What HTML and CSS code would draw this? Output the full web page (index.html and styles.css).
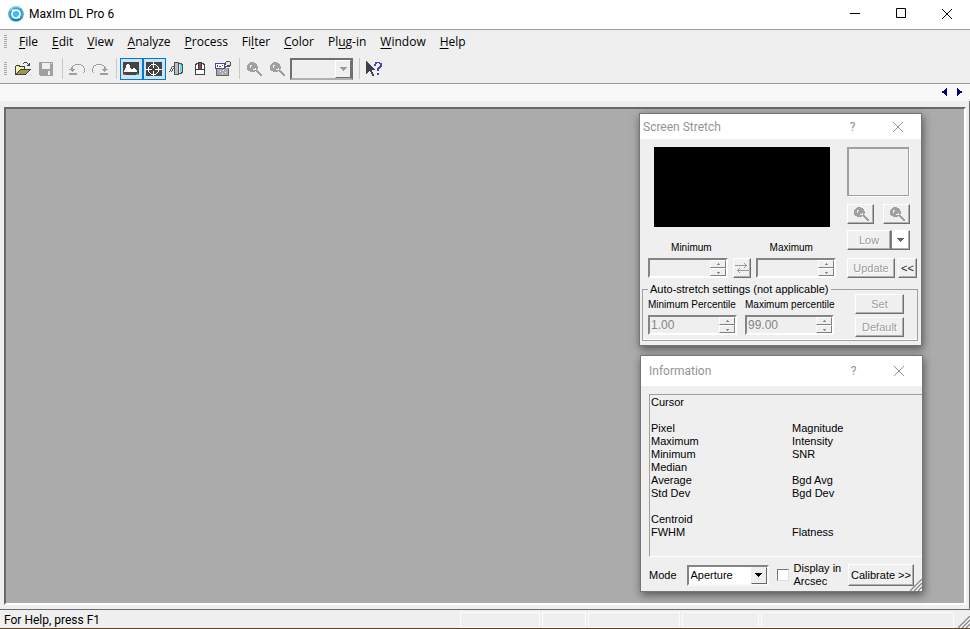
FILE: index.html
```html
<!DOCTYPE html>
<html lang="en">
<head>
<meta charset="utf-8">
<title>MaxIm DL Pro 6</title>
<link rel="stylesheet" href="styles.css">
</head>
<body>
<svg class="defs" aria-hidden="true">
  <symbol id="lens" viewBox="0 0 16 16">
    <path fill="#a0a0a0" d="M4 1h4v1h2v1h1v2h1v3h-1v1h1v1h1v1h1v1h1v1h1v2h-2v-1h-1v-1h-1v-1h-1v-1h-1v-1h-1v1H4v-1H2V9H1V4h1V3h1V2h1z"/>
    <path fill="#efefef" d="M4 4h2v1H5v2H4zM9 7h1v2H7V8h2z"/>
  </symbol>
  <symbol id="close" viewBox="0 0 12 12"><path d="M1 1l10 10M11 1L1 11" fill="none" stroke="currentColor" stroke-width="1"/></symbol>
  <symbol id="down" viewBox="0 0 7 4"><path d="M0 0h7v1H6v1H5v1H4v1H3V3H2V2H1V1H0z" fill="currentColor"/></symbol>
  <symbol id="spinup" viewBox="0 0 5 3"><path d="M2 0h1v1h1v1H1V1h1z" fill="#8a8a8a"/></symbol>
  <symbol id="spindown" viewBox="0 0 5 3"><path d="M1 1h3v1H3v1H2V2H1z" fill="#8a8a8a"/></symbol>
  <symbol id="grip" viewBox="0 0 12 12"><path d="M0 12L12 0M4 12l8-8M8 12l4-4" stroke="#8c8c8c" stroke-width="1.4"/><path d="M2 12L12 2M6 12l6-6M10 12l2-2" stroke="#fff" stroke-width="1"/></symbol>
</svg>
<div class="app">
  <header class="titlebar">
    <svg class="logo" viewBox="0 0 16 16" aria-hidden="true">
      <circle cx="8" cy="8" r="7.8" fill="#35a6d8"/>
      <path d="M1.5 5A7 7 0 0 1 12 2" fill="none" stroke="#8bd0ee" stroke-width="1.6"/>
      <path d="M4 13a7 7 0 0 0 9.500-2" fill="none" stroke="#1682bd" stroke-width="2"/>
      <circle cx="8" cy="8" r="4" fill="#4ab9e6" stroke="#fff" stroke-width="1.700"/>
      <path d="M4 4l3 1M12 12l-2-2" stroke="#fff" stroke-width="1.500"/>
    </svg>
    <h1>MaxIm DL Pro 6</h1>
    <div class="winctl">
      <button type="button" aria-label="Minimize"><svg width="11" height="11" viewBox="0 0 11 11"><path d="M0 5.500h10" stroke="#000"/></svg></button>
      <button type="button" aria-label="Maximize"><svg width="11" height="11" viewBox="0 0 11 11"><path d="M.5.5h9v9h-9z" fill="none" stroke="#000"/></svg></button>
      <button type="button" aria-label="Close"><svg width="12" height="12"><use href="#close"/></svg></button>
    </div>
  </header>

  <nav class="menubar" aria-label="Main menu">
    <span class="handle"></span>
    <button type="button"><u>F</u>ile</button>
    <button type="button"><u>E</u>dit</button>
    <button type="button"><u>V</u>iew</button>
    <button type="button"><u>A</u>nalyze</button>
    <button type="button"><u>P</u>rocess</button>
    <button type="button">Fi<u>l</u>ter</button>
    <button type="button"><u>C</u>olor</button>
    <button type="button">Pl<u>u</u>g-in</button>
    <button type="button"><u>W</u>indow</button>
    <button type="button"><u>H</u>elp</button>
  </nav>

  <div class="toolbar" role="toolbar" aria-label="Standard">
    <span class="handle"></span>
    <button type="button" aria-label="Open"><svg class="icon" viewBox="0 0 16 16">
      <path fill="#404040" d="M1 4h4v1h5v3H9V6H4V5H1zM0 5h1v8H0zM0 13h11v1H0zM5 8h11v1h-1v1h-1v1h-1v1h-1v1h-1v1h-1v-1h1v-1h1v-1h1v-1h1V9H5zM4 9h1v1H4zM3 10h1v1H3zM2 11h1v1H2zM1 12h1v1H1zM8 2h1v1H8zM9 1h3v1H9zM12 2h1v1h-1zM13 3h1v1h-1zM14 2h1v3h-3V4h2z"/>
      <path fill="#f3ee91" d="M1 5h3v1h5v2H4v1H3v1H2v1H1z"/><path fill="#fff" d="M2 6h1v1H2zM4 7h1v1H4zM6 6h1v1H6zM1 8h1v1H1zM7 7h1v1H7z"/>
      <path fill="#9c9a45" d="M5 9h9v1h-1v1h-1v1h-1v1H2v-1h1v-1h1v-1h1z"/></svg></button>
    <button type="button" disabled aria-label="Save"><svg class="icon" viewBox="0 0 16 16">
      <path fill="#a0a0a0" fill-rule="evenodd" d="M1 1h14v14H2v-1H1zM4 2v6h8V2zM10 10v4h2v-4z"/><path fill="#efefef" d="M13 2h1v1h-1z"/></svg></button>
    <i class="sep"></i>
    <button type="button" disabled aria-label="Undo"><svg class="icon" viewBox="0 0 16 16">
      <path fill="#a0a0a0" d="M6 3h6v1H6zM4 4h2v1H4zM12 4h2v1h-2zM3 5h1v3h2v1H5v1H4v1H3v-1H2V9H0V8h2V6h1zM14 5h1v2h-1zM15 7h1v4h-1zM14 11h1v1h-1zM0 12h8v2H0z"/></svg></button>
    <button type="button" disabled aria-label="Redo"><svg class="icon" viewBox="0 0 16 16">
      <g transform="matrix(-1 0 0 1 16 0)"><path fill="#a0a0a0" d="M6 3h6v1H6zM4 4h2v1H4zM12 4h2v1h-2zM3 5h1v3h2v1H5v1H4v1H3v-1H2V9H0V8h2V6h1zM14 5h1v2h-1zM15 7h1v4h-1zM14 11h1v1h-1zM0 12h8v2H0z"/></g></svg></button>
    <i class="sep"></i>
    <button type="button" class="on" aria-pressed="true" aria-label="Screen Stretch"><svg class="icon" viewBox="0 0 16 16">
      <path fill="#444" d="M0 1h16v13H0z"/><path fill="#fff" d="M1 11V9h1V7h1V4h1V3h2v1h1v3h1v1h2V7h2v1h1v1h1v2z"/><path fill="#e33" d="M1 12h1v1h1v1H0v-1h1z"/><path fill="#2c4" d="M14 12h1v1h1v1h-3v-1h1z"/></svg></button>
    <button type="button" class="on" aria-pressed="true" aria-label="Information"><svg class="icon" viewBox="0 0 16 16">
      <path fill="#444" d="M0 1h16v14H0z"/><path fill="#fff" d="M5 3h5v1H5zM4 4h1v1H4zM10 4h1v1h-1zM3 5h1v1H3zM11 5h1v1h-1zM2 6h1v5H2zM12 6h1v5h-1zM3 11h1v1H3zM11 11h1v1h-1zM4 12h1v1H4zM10 12h1v1h-1zM5 13h5v1H5zM7 1h1v6H7zM7 10h1v5H7zM0 8h6v1H0zM9 8h7v1H9z"/></svg></button>
    <button type="button" aria-label="Camera Control"><svg class="icon" viewBox="0 0 16 16">
      <path fill="#505050" d="M5 1h5v1h3v1h1v9h-1v1h-3v1H5zM3 5h2v1H3zM2 6h1v2H2zM4 7h1v1H4zM3 8h1v2H3zM1 8h1v2H1zM0 10h1v1H0zM2 10h1v1H2z"/><path fill="#bdbdbd" d="M6 2h3v11H6z"/><path fill="#e8e8e8" d="M10 3h1v9h-1z"/><path fill="#62dce2" d="M11 3h1v1h1v7h-1v1h-1z"/></svg></button>
    <button type="button" aria-label="Observatory"><svg class="icon" viewBox="0 0 16 16">
      <path fill="#404040" d="M6 1h4v1h2v1h1v11H3V3h1V2h2z"/><path fill="#fff" d="M5 3h1v5H4V4h1zM10 3h1v1h1v4h-2zM4 9h8v4H4z"/><path fill="#984444" d="M7 2h2v6H7z"/></svg></button>
    <button type="button" aria-label="Batch"><svg class="icon" viewBox="0 0 16 16">
      <path fill="#aaa" d="M2 7h12v8H2z"/><path fill="#666" d="M1 7h1v8H1zM1 14h12v1H1zM13 7h1v8h-1z"/><path fill="#fff" d="M5 10h1v1H5zM8 9h1v1H8zM7 12h1v1H7zM10 11h1v1h-1z"/>
      <path fill="#4545b8" d="M0 2h10v6H0z"/><path fill="#fff" d="M1 3h8v4H1z"/><path fill="#4545b8" d="M2 4h1v2H2zM4 5h2v1H4zM7 4h1v1H7z"/><path fill="#555" d="M10 1h1V0h4v1h1v4h-1v1h-4v1h-1v1H7V7h2V6h1z"/><path fill="#e4e4e4" d="M11 1h4v3h-3v1h-2V4h1z"/></svg></button>
    <i class="sep"></i>
    <button type="button" disabled aria-label="Zoom in"><svg class="icon"><use href="#lens"/></svg></button>
    <button type="button" disabled aria-label="Zoom out"><svg class="icon"><use href="#lens"/></svg></button>
    <span class="combo zoom off"><select disabled aria-label="Zoom level"><option></option></select><span class="drop"><svg width="7" height="4"><use href="#down"/></svg></span></span>
    <i class="sep"></i>
    <button type="button" aria-label="Context help"><svg class="icon" viewBox="0 0 16 16">
      <path fill="#404048" d="M0 0h1v1h1v1h1v1h1v1h1v1h1v1h1v1h1v1h1v1H6v2h1v2h1v2H6v-2H5v-2H4v-1H3v1H2v1H1v1H0z"/><path fill="#4848a8" d="M9 1h5v1h2v4h-1v1h-1v1h-1v2h-2V7h1V6h1V5h1V3h-1V2h-2v1h-1v2H8V3h1zM11 12h2v2h-2z"/></svg></button>
  </div>

  <div class="tabstrip">
    <button type="button" aria-label="Previous window"><svg width="5" height="8" viewBox="0 0 5 8"><path fill="#000080" d="M4 0h1v8H4V7H3V6H2V5H0V3h2V2h1V1h1z"/></svg></button>
    <button type="button" aria-label="Next window"><svg width="5" height="8" viewBox="0 0 5 8"><path fill="#000080" d="M0 0h1v1h1v1h1v1h2v2H3v1H2v1H1v1H0z"/></svg></button>
  </div>

  <div class="frame">
  <main class="desk">
    <section class="dialog stretch" aria-label="Screen Stretch">
      <header class="caption">
        <h2>Screen Stretch</h2>
        <button type="button" aria-label="Help">?</button>
        <button type="button" aria-label="Close"><svg width="12" height="12"><use href="#close"/></svg></button>
      </header>
      <div class="stretchbody">
        <div class="levels">
          <div class="histogram"></div>
          <div class="heads"><label for="min">Minimum</label><label for="max">Maximum</label></div>
          <div class="pair">
            <span class="spin"><input id="min" type="text" disabled><span class="arrows"><button type="button" disabled aria-label="Raise minimum"><svg width="5" height="3"><use href="#spinup"/></svg></button><button type="button" disabled aria-label="Lower minimum"><svg width="5" height="3"><use href="#spindown"/></svg></button></span></span>
            <button type="button" class="btn swap" disabled aria-label="Swap"><svg width="14" height="12" viewBox="0 0 14 12"><path fill="#999" d="M0 3h11v1H0zM9 1h1v1h1v1h1v1h-1v1h-1v1H9V5h1V2H9zM3 8h11v1H3zM4 6h1v1H4v3h1v1H4v-1H3V9H2V8h1V7h1z"/></svg></button>
            <span class="spin"><input id="max" type="text" disabled><span class="arrows"><button type="button" disabled aria-label="Raise maximum"><svg width="5" height="3"><use href="#spinup"/></svg></button><button type="button" disabled aria-label="Lower maximum"><svg width="5" height="3"><use href="#spindown"/></svg></button></span></span>
          </div>
        </div>
        <div class="side">
          <div class="preview"></div>
          <div class="lenses"><button type="button" class="btn" disabled aria-label="Zoom in"><svg class="icon"><use href="#lens"/></svg></button><button type="button" class="btn" disabled aria-label="Zoom out"><svg class="icon"><use href="#lens"/></svg></button></div>
          <div class="low"><button type="button" class="btn" disabled>Low</button><button type="button" class="btn pick" aria-label="Stretch level"><svg width="7" height="4"><use href="#down"/></svg></button></div>
          <div class="update"><button type="button" class="btn" disabled>Update</button><button type="button" class="btn fold">&lt;&lt;</button></div>
        </div>
      </div>
      <fieldset>
        <legend>Auto-stretch settings (not applicable)</legend>
        <div class="auto">
          <div class="field"><label for="minp">Minimum Percentile</label>
            <span class="spin"><input id="minp" type="text" value="1.00" disabled><span class="arrows"><button type="button" disabled aria-label="Raise minimum percentile"><svg width="5" height="3"><use href="#spinup"/></svg></button><button type="button" disabled aria-label="Lower minimum percentile"><svg width="5" height="3"><use href="#spindown"/></svg></button></span></span></div>
          <div class="field"><label for="maxp">Maximum percentile</label>
            <span class="spin"><input id="maxp" type="text" value="99.00" disabled><span class="arrows"><button type="button" disabled aria-label="Raise maximum percentile"><svg width="5" height="3"><use href="#spinup"/></svg></button><button type="button" disabled aria-label="Lower maximum percentile"><svg width="5" height="3"><use href="#spindown"/></svg></button></span></span></div>
          <div class="actions"><button type="button" class="btn" disabled>Set</button><button type="button" class="btn" disabled>Default</button></div>
        </div>
      </fieldset>
    </section>

    <section class="dialog info" aria-label="Information">
      <header class="caption">
        <h2>Information</h2>
        <button type="button" aria-label="Help">?</button>
        <button type="button" aria-label="Close"><svg width="12" height="12"><use href="#close"/></svg></button>
      </header>
      <div class="readout">
        <table>
          <tr><td>Cursor</td><td></td></tr>
          <tr><td></td><td></td></tr>
          <tr><td>Pixel</td><td>Magnitude</td></tr>
          <tr><td>Maximum</td><td>Intensity</td></tr>
          <tr><td>Minimum</td><td>SNR</td></tr>
          <tr><td>Median</td><td></td></tr>
          <tr><td>Average</td><td>Bgd Avg</td></tr>
          <tr><td>Std Dev</td><td>Bgd Dev</td></tr>
          <tr><td></td><td></td></tr>
          <tr><td>Centroid</td><td></td></tr>
          <tr><td>FWHM</td><td>Flatness</td></tr>
        </table>
      </div>
      <div class="infofoot">
        <label for="mode">Mode</label>
        <span class="combo mode"><select id="mode"><option>Aperture</option></select><span class="drop"><svg width="7" height="4"><use href="#down"/></svg></span></span>
        <input type="checkbox" id="arcsec"><label for="arcsec" class="wrap">Display in Arcsec</label>
        <button type="button" class="btn">Calibrate &gt;&gt;</button>
      </div>
      <svg class="corner" width="12" height="12"><use href="#grip"/></svg>
    </section>
  </main>
  </div>

  <footer class="status">
    <span class="message">For Help, press F1</span>
    <span class="pane p1"></span><span class="pane p2"></span><span class="pane p3"></span><span class="pane p4"></span><span class="pane p5"></span>
    <svg width="12" height="12"><use href="#grip"/></svg>
  </footer>
</div>
</body>
</html>
```
FILE: styles.css
```css
* { box-sizing: border-box; }
body { margin: 0; font: 12px/16px Roboto, "Noto Sans", sans-serif; color: #000; background: #efefef; }
button, input, select { font: inherit; color: inherit; margin: 0; padding: 0; border: 0; border-radius: 0; background: none; }
h1, h2 { margin: 0; font-size: 12px; font-weight: 400; }
svg { display: block; flex: none; }
.defs { position: absolute; width: 0; height: 0; }
.icon { width: 16px; height: 16px; shape-rendering: crispEdges; }
.app { min-height: 100vh; display: flex; flex-direction: column; border-bottom: 1px solid #5e4320; }

.titlebar { height: 30px; display: flex; align-items: center; background: #fff; border-bottom: 1px solid #9b9b9b; padding: 0 0 2px 8px; gap: 5px; }
.logo { width: 16px; height: 16px; }
.winctl { margin-left: auto; display: flex; }
.winctl button { width: 46px; height: 27px; display: grid; place-items: center; }

.menubar { height: 24px; display: flex; align-items: center; font-family: "Open Sans", "Noto Sans", sans-serif; }
.menubar button { padding: 0 7px; }
.menubar u { text-underline-offset: 2px; }
.handle { width: 3px; height: 14px; margin: 0 5px 0 4px; background: repeating-linear-gradient(#a8a8a8 0 1px, #efefef 1px 2px); }

.toolbar { height: 30px; display: flex; align-items: center; border-bottom: 1px solid #9b9b9b; }
.toolbar button { width: 23px; height: 22px; padding-right: 1px; display: grid; place-items: center; }
.toolbar .on { background: #cce4f7; border: 1px solid #0078d7; }
.sep { width: 8px; height: 21px; border-left: 4px solid transparent; background: linear-gradient(90deg, #c8c8c8 1px, transparent 1px) padding-box; }

.combo { display: flex; background: #fff; border: 2px solid; border-color: #848484 #f8f8f8 #f8f8f8 #848484; }
.combo select { appearance: none; flex: 1; min-width: 0; padding-left: 2px; opacity: 1; }
.combo .drop { width: 16px; display: grid; place-items: center; background: #efefef; border: 1px solid; border-color: #fff #707070 #707070 #fff; pointer-events: none; }
.combo.off { background: #efefef; color: #999; border-color: #707070 #707070 #b0b0b0 #707070; }
.zoom { width: 63px; height: 22px; margin: 0 2px 0 1px; }

.tabstrip { height: 17px; display: flex; justify-content: flex-end; align-items: center; background: #f8f8f8; gap: 10px; padding: 0 8px 2px 0; }
.tabstrip button { display: block; }

.frame { flex: 1; display: flex; padding: 6px 3px 4px 4px; border-right: 1px solid #6c6c6c; }
.desk { flex: 1; min-height: 497px; position: relative; background: #ababab; border: 2px solid; border-color: #686868 #fff #fff #686868; }

.dialog { position: absolute; width: 283px; font: 11px/13px "Liberation Sans", Arial, sans-serif; background: #efefef; border: 1px solid #757575; box-shadow: 1px 3px 8px rgba(0, 0, 0, .5); }
.stretch { top: 4px; right: 42px; }
.info { top: 246px; right: 41px; }
.caption { display: flex; align-items: center; height: 25px; background: #fff; color: #949494; font: 12px/16px Roboto, "Noto Sans", sans-serif; padding: 0 1px 0 3px; }
.caption h2 { margin-right: auto; }
.caption button { width: 45px; height: 24px; display: grid; place-items: center; }
.info .caption { height: 30px; padding-left: 8px; }

.btn { background: #f0f0f0; height: 20px; display: grid; place-items: center; white-space: nowrap; border: 1px solid; border-color: #fff #707070 #707070 #fff; box-shadow: inset -1px -1px #b0b0b0; }
.btn:disabled { color: #9c9c9c; text-shadow: 1px 1px #fff; }

.stretchbody { display: flex; gap: 11px; padding: 8px 4px 6px 8px; }
.levels { width: 188px; }
.histogram { height: 80px; margin: 0 6px 14px; background: #000; }
.pair { display: flex; justify-content: space-between; }
.pair .spin { width: 80px; }
.swap { width: 18px; }
.stretch label { font-size: 10px; }
.heads { display: flex; justify-content: center; gap: 58px; margin-bottom: 4px; }
.spin { display: flex; height: 20px; border: 2px solid; border-color: #848484 #fff #fff #848484; background: #efefef; }
.spin input { flex: 1; min-width: 0; color: #858585; font-size: 12px; padding-left: 1px; }
.arrows { width: 16px; display: grid; grid-template-rows: 1fr 1fr; }
.arrows button { display: grid; place-items: center; border: 1px solid; border-color: #fff #808080 #808080 #fff; min-height: 0; }

.side { flex: 1; display: flex; flex-direction: column; }
.preview { width: 62px; height: 49px; margin-bottom: 8px; border: 2px solid #a0a0a0; border-right-width: 1px; border-bottom-width: 1px; box-shadow: 1px 1px #fff; }
.lenses { display: flex; gap: 9px; margin-bottom: 6px; }
.lenses .btn { width: 27px; }
.low { display: flex; width: 63px; margin-bottom: 8px; }
.low .btn { flex: 1; }
.low .pick { flex: none; width: 19px; color: #666; background: #fff; border-left-color: #808080; }
.update { display: flex; gap: 3px; }
.update .btn { flex: 1; }
.update .fold { flex: none; width: 19px; color: #223; }

fieldset { margin: 0 3px 4px 2px; padding: 0 13px 3px 5px; border: 1px solid #a0a0a0; box-shadow: inset 0 -1px #fff; }
legend { line-height: 10px; padding: 0 2px; }
.auto { display: flex; gap: 8px; }
.field { width: 89px; padding-top: 4px; white-space: nowrap; }
.field label { display: block; margin-bottom: 4px; }
.actions { width: 49px; margin-left: auto; display: grid; gap: 3px; }

.readout { margin: 8px 0 0 8px; height: 163px; padding-top: 1px; border: 1px solid; border-color: #a0a0a0 transparent #fff #a0a0a0; border-right: 0; }
.readout table { border-collapse: collapse; width: 100%; table-layout: fixed; }
.readout td { height: 13px; padding: 0 0 0 1px; width: 141px; }
.infofoot { display: flex; align-items: center; padding: 5px 8px 3px; }
.mode { width: 82px; height: 21px; margin: 0 8px 0 10px; }
.mode .drop { border-color: #efefef #666 #666 #efefef; }
.infofoot input { appearance: none; width: 12px; height: 12px; margin-right: 5px; background: #fff; border: 1px solid; border-color: #777 #e0e0e0 #e0e0e0 #777; }
.wrap { width: 50px; }
.infofoot .btn { width: 66px; height: 22px; margin-left: auto; }
.corner { position: absolute; right: 0; bottom: 0; }

.status { height: 19px; display: flex; align-items: center; border-top: 1px solid #6c6c6c; padding: 2px 0 0 4px; gap: 2px; }
.message { margin-right: auto; }
.pane { height: 16px; border: 1px solid #fcfcfc; }
.p1 { width: 80px; }
.p2 { width: 44px; }
.p3 { width: 92px; }
.p4 { width: 77px; }
.p5 { width: 193px; }
.status svg { margin-left: 2px; align-self: flex-end; }
```
